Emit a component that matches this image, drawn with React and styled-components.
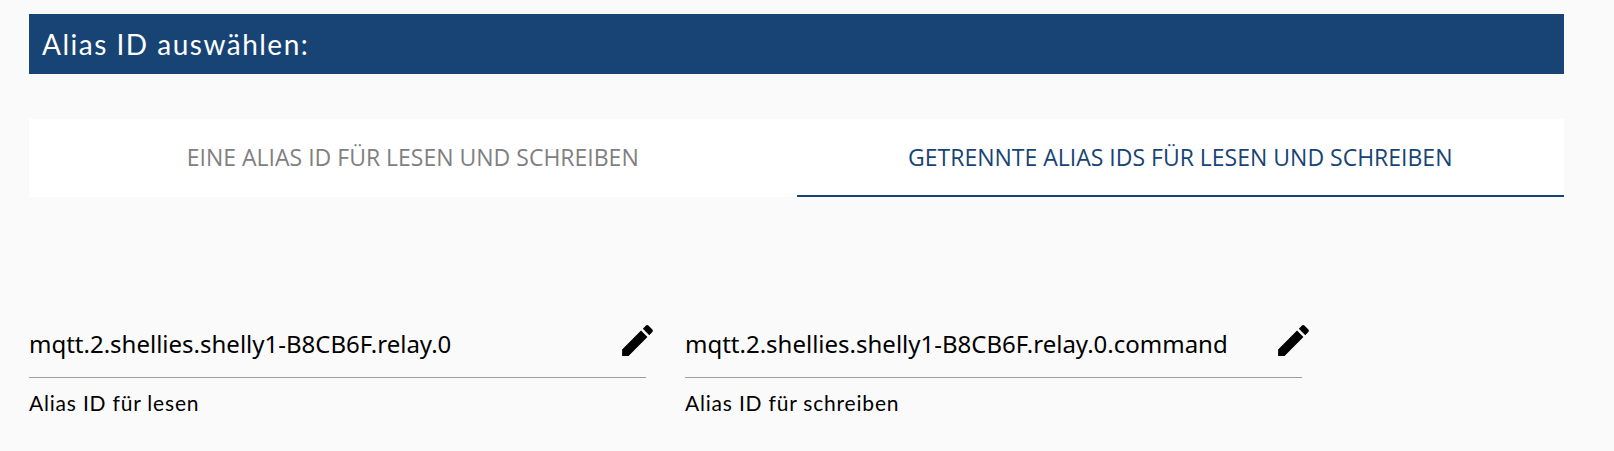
import React, { useState } from 'react';
import styled, { createGlobalStyle } from 'styled-components';

const tabs = ['Eine Alias ID für lesen und schreiben', 'Getrennte Alias IDs für lesen und schreiben'];

const fields = [
  { id: 'read', value: 'mqtt.2.shellies.shelly1-B8CB6F.relay.0', label: 'Alias ID für lesen', valueWidth: 431, labelWidth: 171 },
  { id: 'write', value: 'mqtt.2.shellies.shelly1-B8CB6F.relay.0.command', label: 'Alias ID für schreiben', valueWidth: 553, labelWidth: 215 },
];

export default function App() {
  const [active, setActive] = useState(1);

  return (
    <Page>
      <GlobalStyle />
      <Header>Alias ID auswählen:</Header>
      <Tabs>
        {tabs.map((t, i) => (
          <Tab key={t} $active={active === i} onClick={() => setActive(i)}><span>{t}</span></Tab>
        ))}
      </Tabs>
      <Fields>
        {fields.map((f) => (
          <Field key={f.id}>
            <Row>
              <Value>{f.value}</Value>
              <Edit aria-label="edit">
                <svg viewBox="0 0 24 24" width="41" height="41">
                  <path d="M3 17.25V21h3.75L17.81 9.94l-3.75-3.75L3 17.25zM20.71 7.04c.39-.39.39-1.02 0-1.41l-2.34-2.34c-.39-.39-1.02-.39-1.41 0l-1.83 1.83 3.75 3.75 1.83-1.83z" />
                </svg>
              </Edit>
            </Row>
            <Label>{f.label}</Label>
          </Field>
        ))}
      </Fields>
    </Page>
  );
}

const GlobalStyle = createGlobalStyle`
body {
  margin: 0;
  background: #fafafa;
}
`;
const Page = styled.div`
box-sizing: border-box;
height: 451px;
padding: 14px 50px 0 29px;
overflow: hidden;
font-family: 'Noto Sans', 'Open Sans', sans-serif;
color: #000;
`;
const Header = styled.div`
height: 60px;
line-height: 60px;
padding-left: 13px;
background: #174475;
color: #fff;
font-family: Lato, sans-serif;
font-size: 28px;
letter-spacing: 1.5px;
`;
const Tabs = styled.div`
display: flex;
height: 78px;
margin-top: 45px;
background: #fff;
`;
const Tab = styled.button`
flex: 1;
padding: 0;
border: 0;
border-bottom: 2px solid ${(p) => (p.$active ? '#174475' : 'transparent')};
background: none;
color: ${(p) => (p.$active ? '#174475' : '#808080')};
font-family: 'Open Sans', sans-serif;
font-size: 23px;
text-transform: uppercase;
white-space: nowrap;
`;
const Fields = styled.div`
display: flex;
gap: 39px;
margin-top: 113px;
`;
const Field = styled.div`
width: 617px;
`;
const Row = styled.div`
display: flex;
justify-content: space-between;
height: 67px;
border-bottom: 1px solid #9e9e9e;
`;
const Value = styled.span`
line-height: 68px;
font-size: 24px;
white-space: nowrap;
`;
const Edit = styled.button`
display: flex;
padding: 0;
margin: 10px -12px 0 0;
border: 0;
background: none;
height: 41px;
`;
const Label = styled.div`
padding-top: 9px;
line-height: 32px;
font-family: Lato, sans-serif;
font-size: 21px;
letter-spacing: 0.8px;
`;
